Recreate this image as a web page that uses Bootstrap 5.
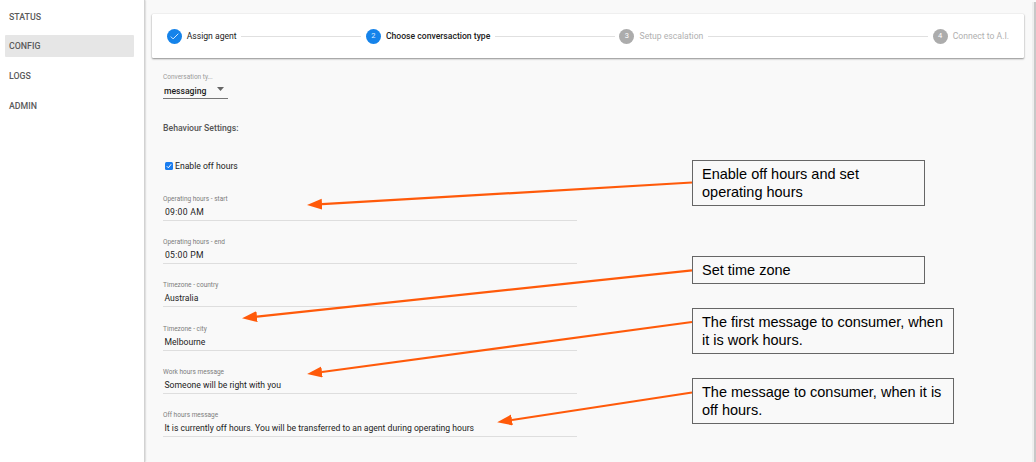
<!DOCTYPE html>
<html lang="en">
<head>
<meta charset="utf-8">
<meta name="viewport" content="width=device-width, initial-scale=1">
<title>Config</title>
<link rel="stylesheet" href="https://cdn.jsdelivr.net/npm/bootstrap@5.3.0/dist/css/bootstrap.min.css">
<style>
body{font-family:Roboto,"Liberation Sans",sans-serif;font-size:8.62px;line-height:12px;color:#212121;background:#f9f9f9;height:462px;overflow:hidden}
.medium{font-weight:500}
.side{width:145px;background:#fff;border-right:1px solid #d2d2d2;box-shadow:0 0 2px rgba(0,0,0,.3);padding:5px 10px 0 5px}
.side .nav-link{height:22px;line-height:23px;padding:0 4px;margin-bottom:7.8px;color:#5a5a5a;font-size:8.8px;font-weight:500;border-radius:1px}
.side .nav-link:first-child{line-height:24px;margin-bottom:8px}
.side .nav-link.active{background:#e6e6e6}
.content{padding:14px 8px 0 7px;min-width:0}
.stepper{height:44px;border:0;border-radius:1px;box-shadow:0 1px 2px rgba(0,0,0,.42),0 0 1px rgba(0,0,0,.2);padding:0 15px 0 14.5px;white-space:nowrap}
.dot{width:15px;height:15px;border-radius:50%;background:#1583ea;color:#dcecff;font-size:7.5px;margin-right:5.2px;flex-shrink:0}
.dot.off{background:#acacac;color:#fff}
.rule{height:1px;background:#e0e0e0;margin:0 4.5px;flex:120 1 0}
.rule.long{flex-grow:220}
.step-off{color:#b0b0b0}
.form-area{padding-left:11px}
.caption{font-size:6.5px;line-height:8px;color:#7c7c7c;white-space:nowrap}
.type{width:65px;margin-top:15px;border-bottom:1px solid #767676;height:26px}
.type .caption{color:#999}
.value{padding-left:1.5px;margin-top:3px;white-space:nowrap;color:#1c1c1c}
.type .value{padding:0 4px 0 1px;margin-top:4px}
.heading{margin-top:23.4px;height:12px;font-size:8.7px;font-weight:500;color:#555}
.check-row{margin-top:26px;margin-bottom:22.2px;padding-left:2px;gap:2px;height:12px}
.field{width:414px;height:43.38px}
.field .inner{height:26px;border-bottom:1px solid #dedede}
.time{letter-spacing:.28px;padding-left:2px}
.note{position:absolute;left:692px;width:233px;height:46px;border:1px solid #666;font:14.5px/18px "Liberation Sans",Arial,sans-serif;color:#000;padding:4px 9px;white-space:nowrap}
.note.wide{width:262px}
.arrows{position:absolute;left:0;top:0}
.edge{width:4px;background:#efefef;border-right:2px solid #c8c8c8;margin-top:2px}
</style>
</head>
<body>
<div class="d-flex h-100 position-relative">
  <nav class="side nav flex-column flex-nowrap flex-shrink-0">
    <a class="nav-link" href="#">STATUS</a>
    <a class="nav-link active" href="#">CONFIG</a>
    <a class="nav-link" href="#">LOGS</a>
    <a class="nav-link" href="#">ADMIN</a>
  </nav>
  <main class="content flex-grow-1">
    <div class="card stepper flex-row align-items-center">
      <span class="dot d-flex align-items-center justify-content-center"><svg width="15" height="15" viewBox="0 0 15 15" fill="none" stroke="#d7eaff" stroke-width="1"><path d="M3.8 7.6l2.3 2.3 5.2-5.2"/></svg></span>
      <span>Assign agent</span>
      <span class="rule"></span>
      <span class="dot d-flex align-items-center justify-content-center">2</span>
      <span class="medium">Choose conversaction type</span>
      <span class="rule"></span>
      <span class="dot off d-flex align-items-center justify-content-center">3</span>
      <span class="step-off">Setup escalation</span>
      <span class="rule long"></span>
      <span class="dot off d-flex align-items-center justify-content-center">4</span>
      <span class="step-off">Connect to A.I.</span>
    </div>
    <div class="form-area">
      <div class="type">
        <div class="caption">Conversation ty...</div>
        <div class="value d-flex align-items-center justify-content-between"><span class="medium">messaging</span><svg width="7" height="4" class="mb-1"><path d="M0 0h7L3.5 4z" fill="#666"/></svg></div>
      </div>
      <div class="heading">Behaviour Settings:</div>
      <div class="check-row d-flex align-items-center"><svg width="8" height="8"><rect width="8" height="8" rx="1.5" fill="#1a7df0"/><path d="M1.8 4.2l1.6 1.6L6.2 2.2" stroke="#fff" fill="none"/></svg><span>Enable off hours</span></div>
      <div class="field"><div class="inner"><div class="caption">Operating hours - start</div><div class="value time">09:00 AM</div></div></div>
      <div class="field"><div class="inner"><div class="caption">Operating hours - end</div><div class="value time">05:00 PM</div></div></div>
      <div class="field"><div class="inner"><div class="caption">Timezone - country</div><div class="value">Australia</div></div></div>
      <div class="field"><div class="inner"><div class="caption">Timezone - city</div><div class="value">Melbourne</div></div></div>
      <div class="field"><div class="inner"><div class="caption">Work hours message</div><div class="value">Someone will be right with you</div></div></div>
      <div class="field"><div class="inner"><div class="caption">Off hours message</div><div class="value">It is currently off hours. You will be transferred to an agent during operating hours</div></div></div>
    </div>
  </main>
  <div class="edge flex-shrink-0"></div>
  <svg class="arrows" width="1036" height="462" fill="#ff5a0a" stroke="#ff5a0a" stroke-width="2.2">
    <defs><marker id="tip" markerUnits="userSpaceOnUse" markerWidth="16" markerHeight="12" refX="0" refY="5.5" orient="auto" stroke="none"><path d="M0 0L15 5.5L0 11z"/></marker></defs>
    <path marker-end="url(#tip)" d="M692 182.5L322 204.2"/>
    <path marker-end="url(#tip)" d="M692 270.3L257 316.6"/>
    <path marker-end="url(#tip)" d="M692 322L322 372"/>
    <path marker-end="url(#tip)" d="M692 392.5L512 420"/>
  </svg>
  <div class="note" style="top:160px">Enable off hours and set<br>operating hours</div>
  <div class="note" style="top:256px;height:28px">Set time zone</div>
  <div class="note wide" style="top:308px">The first message to consumer, when<br>it is work hours.</div>
  <div class="note wide" style="top:378px">The message to consumer, when it is<br>off hours.</div>
</div>
<script src="https://cdn.jsdelivr.net/npm/bootstrap@5.3.0/dist/js/bootstrap.bundle.min.js"></script>
</body>
</html>
